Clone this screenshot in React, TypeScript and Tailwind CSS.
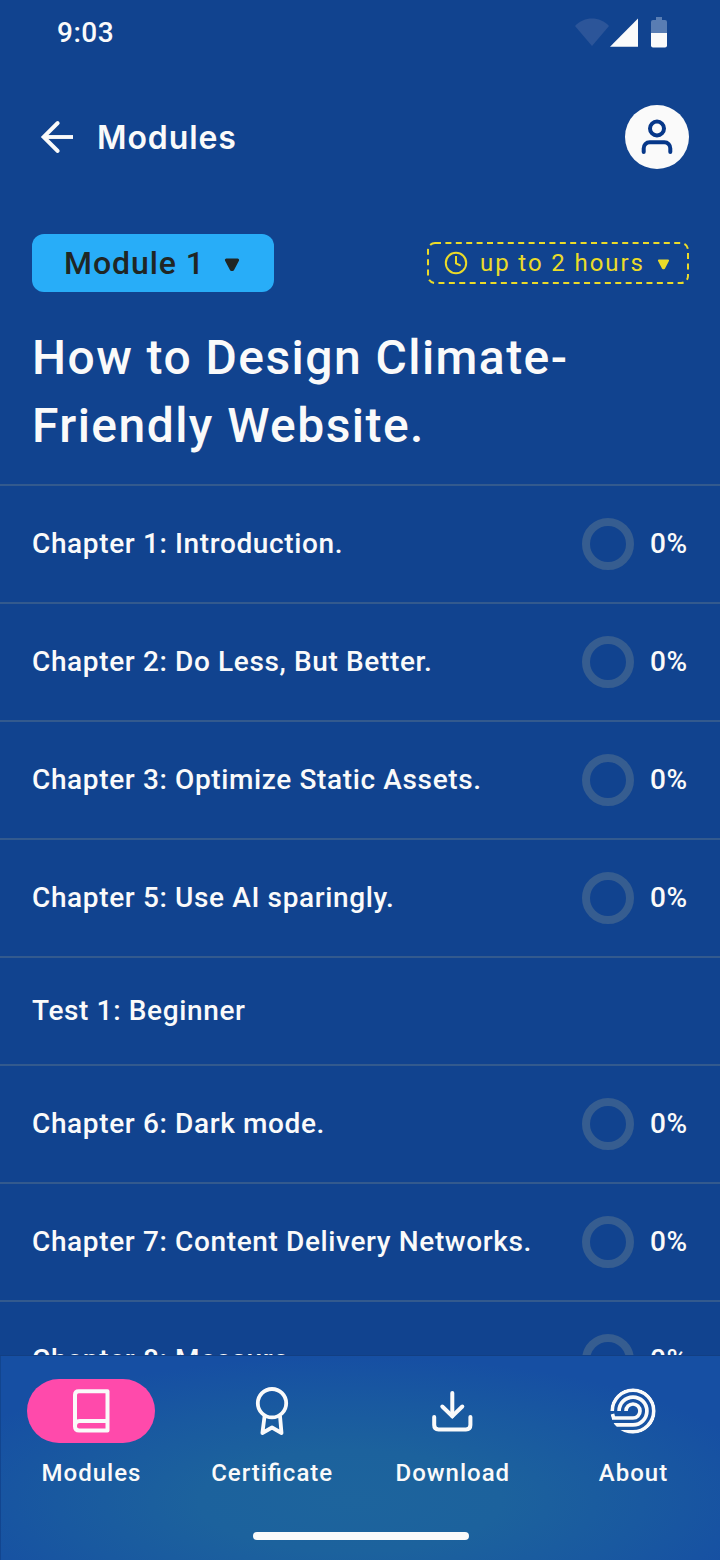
import React from "react";

const chapters: { title: string; progress?: string }[] = [
  { title: "Chapter 1: Introduction.", progress: "0%" },
  { title: "Chapter 2: Do Less, But Better.", progress: "0%" },
  { title: "Chapter 3: Optimize Static Assets.", progress: "0%" },
  { title: "Chapter 5: Use AI sparingly.", progress: "0%" },
  { title: "Test 1: Beginner" },
  { title: "Chapter 6: Dark mode.", progress: "0%" },
  { title: "Chapter 7: Content Delivery Networks.", progress: "0%" },
  { title: "Chapter 8: Measure.", progress: "0%" },
];

function StatusBar() {
  return (
    <div className="flex h-[66px] shrink-0 items-center justify-between pr-[52px] pl-[57px]">
      <span className="text-[28px] font-medium leading-8 tracking-[0.5px]">9:03</span>
      <svg width="94" height="32" viewBox="0 0 94 32" className="mb-[2px]">
        <path d="M1 10 C10 0 26 0 35 10 L18 30 Z" fill="#2c5599" />
        <path d="M36 30.700 L64 2.400 V30.700 Z" fill="#fafafa" />
        <path d="M82 1 H88 V4 H91 Q93 4 93 6 V17 H77 V6 Q77 4 79 4 H82 Z" fill="#597db3" />
        <path d="M77 17 H93 V29.500 Q93 31.500 91 31.500 H79 Q77 31.500 77 29.500 Z" fill="#fafafa" />
      </svg>
    </div>
  );
}

function Header() {
  return (
    <header className="flex h-[142px] shrink-0 items-center justify-between pr-[31px] pl-[40px]">
      <div className="flex items-center gap-[23px]">
        <svg width="34" height="34" viewBox="0 0 34 34" fill="none" stroke="#fafafa" strokeWidth="3.900">
          <path d="M33 17 H4" />
          <path d="M17.700 3 L3.600 17 L17.700 31" strokeLinecap="round" />
        </svg>
        <h2 className="mt-[2px] font-[Inter,sans-serif] text-[32px] leading-10 font-semibold tracking-[0.9px]">Modules</h2>
      </div>
      <div className="flex size-16 items-center justify-center rounded-full bg-[#fafafa]">
        <svg width="64" height="64" viewBox="0 0 64 64" fill="none" stroke="#063789" strokeWidth="4" strokeLinecap="round">
          <circle cx="32" cy="23.500" r="7" />
          <path d="M18.700 47 V43.500 A6 6 0 0 1 24.700 37.200 H39.300 A6 6 0 0 1 45.300 43.500 V47" />
        </svg>
      </div>
    </header>
  );
}

function Caret({ className }: { className: string }) {
  return (
    <svg viewBox="0 0 16 14" className={className} fill="currentColor" stroke="currentColor" strokeWidth="3" strokeLinejoin="round">
      <path d="M2.400 2 H13.600 L8.600 11.500 H7.400 Z" />
    </svg>
  );
}

function ModuleIntro() {
  return (
    <section className="flex h-[278px] shrink-0 flex-col border-b-2 border-[#335a8e] pt-[26px]">
      <div className="flex items-center justify-between pr-[31px] pl-8">
        <button className="flex h-[58px] w-[242px] items-center rounded-xl bg-[#28adf8] pl-8 text-[#202624]">
          <span className="text-[32px] leading-10 font-medium tracking-[0.95px]">Module 1</span>
          <Caret className="mt-[3px] ml-[19px] h-[14px] w-[16px]" />
        </button>
        <button className="relative flex h-[42px] w-[262px] items-center pl-[17px] text-[#ebdb29]">
          <svg className="absolute inset-0" width="262" height="42" fill="none" stroke="currentColor" strokeWidth="2">
            <rect x="1" y="1" width="260" height="40" rx="7" strokeDasharray="6 4.400" strokeDashoffset="0" />
          </svg>
          <svg width="24" height="24" viewBox="0 0 24 24" fill="none" stroke="currentColor" strokeWidth="2">
            <circle cx="12" cy="12" r="10.200" />
            <path d="M12 5 V12.300 L16.700 14.700" />
          </svg>
          <span className="ml-3 text-[24px] leading-8 tracking-[1.9px]">up to 2 hours</span>
          <Caret className="mt-[2px] ml-3 h-[11px] w-[13px]" />
        </button>
      </div>
      <h1 className="mt-8 pl-8 text-[48px] leading-[68px] font-medium tracking-[1.44px]">
        How to Design Climate-
        <br />
        Friendly Website.
      </h1>
    </section>
  );
}

function ChapterRow({ title, progress }: { title: string; progress?: string }) {
  return (
    <li
      className={`flex shrink-0 items-center justify-between border-b-2 border-[#335a8e] pl-8 ${
        progress ? "h-[118px]" : "h-[108px]"
      }`}
    >
      <span className="text-[28px] leading-10 font-medium tracking-[0.63px]">{title}</span>
      {progress && (
        <div className="flex w-[138px] items-center gap-4">
          <span className="size-[52px] rounded-full border-8 border-[#365d90]" />
          <span className="text-[28px] leading-10 font-medium tracking-[0.6px]">{progress}</span>
        </div>
      )}
    </li>
  );
}

function BookIcon() {
  return (
    <svg width="64" height="64" viewBox="0 0 64 64" fill="none" stroke="currentColor" strokeWidth="4" strokeLinejoin="round">
      <path d="M19.800 12.300 H48.500 V51.500 H20.300 Q16 51.500 16 47.500 V16 Q16 12.300 19.800 12.300 Z" />
      <path d="M16 47 Q16 42 20.700 42 H48" />
    </svg>
  );
}

function RibbonIcon() {
  return (
    <svg width="64" height="64" viewBox="0 0 64 64" fill="none" stroke="currentColor" strokeWidth="3.800" strokeLinejoin="round">
      <circle cx="32" cy="24.200" r="14.200" />
      <path d="M24.600 37 L22.400 54 L32 48.500 L41.500 54 L40 37" />
    </svg>
  );
}

function DownloadIcon() {
  return (
    <svg width="64" height="64" viewBox="0 0 64 64" fill="none" stroke="currentColor" strokeWidth="4" strokeLinecap="round">
      <path d="M32.300 14 V37" />
      <path d="M22.300 27.500 L32.300 37.200 L42.300 27.500" />
      <path d="M14.200 38 V46 Q14.200 50.400 18.600 50.400 H46 Q50.400 50.400 50.400 46 V38" />
    </svg>
  );
}

function AboutIcon() {
  return (
    <svg width="64" height="64" viewBox="0 0 64 64" fill="none" stroke="currentColor" strokeWidth="3.700">
      <defs>
        <clipPath id="about-disc">
          <circle cx="32" cy="32" r="22.800" />
        </clipPath>
      </defs>
      <g clipPath="url(#about-disc)">
        <path d="M11.200 32 A20.800 20.800 0 1 1 32 52.800 H18" />
        <path d="M18.100 32 A13.900 13.900 0 1 1 32 45.900 H11" />
        <path d="M25 32 A7 7 0 1 1 32 39 H12.500 L11.500 35" />
      </g>
    </svg>
  );
}

const tabs = [
  { label: "Modules", Icon: BookIcon, active: true },
  { label: "Certificate", Icon: RibbonIcon, active: false },
  { label: "Download", Icon: DownloadIcon, active: false },
  { label: "About", Icon: AboutIcon, active: false },
];

function BottomNav() {
  return (
    <nav className="flex h-[205px] shrink-0 flex-col items-center border-t border-[#123f83] bg-[radial-gradient(ellipse_430px_145px_at_350px_145px,#1d649d_0%,#1c629d_35%,#1959a0_68%,#164fa3_100%)] pt-[23px] shadow-[inset_1px_0_0_#12458f]">
      <div className="flex w-full justify-between pr-[23px] pl-[27px]">
        {tabs.map(({ label, Icon, active }) => (
          <div key={label} className="flex w-32 flex-col items-center">
            <div
              className={`flex h-16 w-32 items-center justify-center rounded-full ${active ? "bg-[#ff4aab]" : ""}`}
            >
              <Icon />
            </div>
            <span className="mt-[14px] ml-px text-[24px] leading-8 font-medium tracking-[1px] whitespace-nowrap [font-feature-settings:'liga'_1]">
              {label}
            </span>
          </div>
        ))}
      </div>
      <div className="mt-[43px] ml-[2px] h-2 w-[216px] rounded-full bg-[#fafafa]" />
    </nav>
  );
}

export default function App() {
  return (
    <div className="flex h-[1560px] w-[720px] flex-col overflow-hidden bg-[#11438f] font-[Roboto,sans-serif] text-[#fafafa]">
      <StatusBar />
      <Header />
      <main className="flex min-h-0 flex-1 flex-col overflow-hidden">
        <ModuleIntro />
        <ul className="flex flex-col">
          {chapters.map((chapter) => (
            <ChapterRow key={chapter.title} {...chapter} />
          ))}
        </ul>
      </main>
      <BottomNav />
    </div>
  );
}
